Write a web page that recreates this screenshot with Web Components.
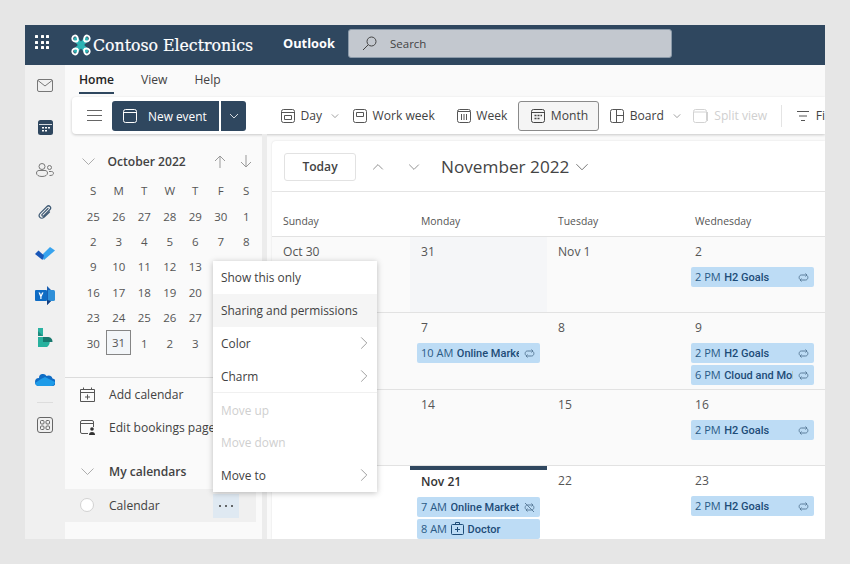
<!DOCTYPE html>
<html lang="en"><head><meta charset="utf-8"><title>Outlook Calendar</title>
<style>
html,body{margin:0;height:100%}
body{background:#e6e6e6;padding:25px;box-sizing:border-box;font-family:"Open Sans","Noto Sans",sans-serif;font-size:12.1px;color:#424242}
</style></head><body>
<x-app></x-app>
<script>
const chev=(d,s=8,c='#777')=>{const p={down:'M1 3l4 4 4-4',up:'M1 7l4-4 4 4',right:'M3 1l4 4-4 4'}[d];return `<svg width="${s}" height="${s}" viewBox="0 0 10 10" fill="none" stroke="${c}" stroke-width="${10/s*0.8}"><path d="${p}"/></svg>`};
const I={
cal:(c='#fff')=>`<svg width="14" height="14" viewBox="0 0 14 14" fill="none" stroke="${c}"><rect x=".5" y=".5" width="13" height="13" rx="2"/><path d="M1 3.5h12"/></svg>`,
day:`<svg width="14" height="14" viewBox="0 0 14 14" fill="none" stroke="#555"><rect x=".5" y=".5" width="13" height="13" rx="2"/><path d="M1 3.5h12M3.5 6.5h7v4h-7z"/></svg>`,
work:`<svg width="14" height="14" viewBox="0 0 14 14" fill="none" stroke="#555"><rect x=".5" y=".5" width="13" height="13" rx="2"/><path d="M3.5 3.5h7v4h-7z"/></svg>`,
week:`<svg width="14" height="14" viewBox="0 0 14 14" fill="none" stroke="#555"><rect x=".5" y=".5" width="13" height="13" rx="2"/><path d="M1 2.5h12M4.5 5v6M7 5v6M9.500 5v6"/></svg>`,
month:`<svg width="14" height="14" viewBox="0 0 14 14" fill="none" stroke="#444"><rect x=".5" y=".5" width="13" height="13" rx="2"/><path d="M1 3.5h12"/><path d="M3.5 6.500h2M6.500 6.500h2M9.500 6.500h1.500M3.500 9.500h2M6.500 9.500h2" stroke-width="1.4"/></svg>`,
board:`<svg width="14" height="14" viewBox="0 0 14 14" fill="none" stroke="#555"><rect x=".5" y=".5" width="13" height="13" rx="2"/><path d="M6.500 1v12M7 6.500h6"/></svg>`,
split:`<svg width="16" height="16" viewBox="0 0 16 16" fill="none" stroke="#d2d2d2"><rect x=".5" y="1.500" width="13" height="13" rx="2"/><path d="M1 4h12M14.500 4v9"/></svg>`,
filter:`<svg width="14" height="12" viewBox="0 0 14 12" fill="none" stroke="#555"><path d="M1 1.500h12M3 6h8M5 10.500h4"/></svg>`,
rep:`<svg width="11" height="11" viewBox="0 0 11 11" fill="none" stroke="#5d7f9c"><path d="M2 7.500C.6 6.500 .8 3 3.500 3H9M7.500 1.500L9 3 7.500 4.500M9 3.500c1.400 1 1.200 4.500-1.500 4.500H2M3.500 6.500L2 8l1.500 1.500"/></svg>`,
norep:`<svg width="11" height="11" viewBox="0 0 11 11" fill="none" stroke="#5d7f9c"><path d="M2 7.500C.6 6.500 .8 3 3.500 3H9M7.500 1.500L9 3 7.500 4.500M9 3.500c1.400 1 1.200 4.500-1.500 4.500H2M3.500 6.500L2 8l1.500 1.500M1 1l9 9"/></svg>`
};
function def(name,css,html){customElements.define(name,class extends HTMLElement{
  connectedCallback(){if(this.shadowRoot)return;this.attachShadow({mode:'open'}).innerHTML=`<style>${css}</style>`+(typeof html==='function'?html(this):html);}
});}

def('x-app',`:host{display:flex;flex-direction:column;width:800px;height:514px;overflow:hidden;position:relative;background:#fafafa}
.b{display:flex;flex:1;min-height:0}.m{flex:1;min-width:0;display:flex;flex-direction:column}
.c{flex:1;display:flex;min-height:0}`,
`<x-topbar></x-topbar><div class="b"><x-rail></x-rail><div class="m"><x-tabs></x-tabs><x-ribbon></x-ribbon><div class="c"><x-side></x-side><x-cal></x-cal></div></div></div><x-menu></x-menu>`);

def('x-topbar',`:host{display:flex;align-items:center;height:40px;background:#2f475f;color:#fff;flex:none}
.w{width:14px;height:14px;margin:0 0 6px 10px;display:grid;grid-template-columns:repeat(3,3px);gap:2.5px}.w i{background:#fff;border-radius:.5px}
svg.l{margin-left:22px;flex:none}
.n{font-family:"DejaVu Serif",serif;font-stretch:condensed;font-size:17.5px;margin-left:2px;width:160px;white-space:nowrap;-webkit-text-stroke:.2px #fff}
.o{font-weight:700;font-size:12.8px;margin:0 0 5px 30px;width:65px}
.s{width:324px;height:29px;background:#c3c8cf;border:1px solid #8b9aa9;border-radius:3px;display:flex;align-items:center;color:#444;font-size:11.5px;box-sizing:border-box;align-self:flex-start;margin-top:4px}
.s svg{margin:0 13px 0 13px}`,
`<div class="w">${'<i></i>'.repeat(9)}</div>
<svg class="l" width="20" height="22" viewBox="0 0 22 22" preserveAspectRatio="none"><path d="M3.500 3.500L7 3l4 4.500L15 3l3.500.5L19 7l-4.500 4 4.500 4-.5 3.500L15 19l-4-4.500L7 19l-3.500-.5L3 15l4.500-4L3 7z" fill="#2cb3b5"/><g fill="none" stroke="#fff" stroke-width="2"><path d="M7.500 7C3.500 8.500 1 6.500 1.500 4 2 1.500 5.500 .5 7 3c.5 1 .7 2.500.5 4M14.500 7c4 1.500 6.500-.5 6-3C20 1.500 16.500 .5 15 3c-.5 1-.7 2.500-.5 4M7.500 15c-4-1.500-6.500.5-6 3 .5 2.500 4 3.500 5.500 1 .5-1 .7-2.500.5-4M14.500 15c4-1.500 6.500.5 6 3-.5 2.500-4 3.500-5.500 1-.5-1-.7-2.500-.5-4"/></g></svg>
<div class="n">Contoso Electronics</div><div class="o">Outlook</div>
<div class="s"><svg width="15" height="15" viewBox="0 0 15 15" fill="none" stroke="#444"><circle cx="9.500" cy="5.500" r="4.500"/><path d="M6.200 8.800L1 14"/></svg>Search</div>`);

def('x-rail',`:host{display:flex;flex-direction:column;align-items:center;width:40px;flex:none;background:#f0f0f0;box-sizing:border-box}
div{height:41.9px;width:40px;display:flex;align-items:center;justify-content:center;flex:none}
div:first-child{margin-top:-1px}
.r{height:2px;display:block;width:16px;border-top:1px solid #ddd;margin:2px 0 0;box-sizing:border-box}.a{height:42px}`,
`<div><svg width="16" height="13" viewBox="0 0 16 13" fill="none" stroke="#777"><rect x=".5" y=".5" width="15" height="12" rx="1.500"/><path d="M1 1.500l7 5.500 7-5.500"/></svg></div>
<div><svg width="15" height="15" viewBox="0 0 15 15"><rect width="15" height="15" rx="2.500" fill="#2f475f"/><rect x="1" y="4" width="13" height=".8" fill="#fff"/><path d="M4 7h2v1.500H4zM7 7h2v1.500H7zM10 7h2v1.500h-2zM4 10h2v1.500H4zM7 10h2v1.500H7z" fill="#fff"/></svg></div>
<div><svg width="18" height="14" viewBox="0 0 18 14" fill="none" stroke="#777"><circle cx="6" cy="3.500" r="3"/><path d="M.5 10c0-1.500 1-2.500 2.500-2.500h6c1.500 0 2.500 1 2.500 2.500 0 2-2 3.500-5.500 3.500S.5 12 .5 10z"/><circle cx="13.500" cy="4.500" r="2"/><path d="M13 8.500h2.500c1.200 0 2 .7 2 1.800 0 1.500-1.700 2.400-4 2.200"/></svg></div>
<div><svg width="14" height="14" viewBox="0 0 14 14" fill="none" stroke="#3f5a74" stroke-width="1.2" stroke-linecap="round"><path d="M10 3.500L4.200 9.300c-1 1 .5 2.500 1.500 1.500l6.300-6.300c2-2-1-5-3-3L2.300 8.200c-3 3 .7 7 3.700 4L11.500 7"/></svg></div>
<div><svg width="20" height="15" viewBox="0 0 20 15"><path d="M6 10l9-9 5 3.500L9 14z" fill="#37a3ee"/><path d="M0 8l3.500-3.500L9 9.500 7.500 14z" fill="#1956b8"/></svg></div>
<div><svg width="20" height="19" viewBox="0 0 20 19"><path d="M12 0l5 5v9l-5 5z" fill="#1a5fb0"/><path d="M13 4h5.500a1.500 1.500 0 011.500 1.500v8a1.500 1.500 0 01-1.500 1.500H13z" fill="#2f8fd8"/><rect y="4" width="12" height="11" rx="1" fill="#0f6cc4"/><path d="M12 14l4 1-4 4z" fill="#123f82"/><path d="M3.500 6.500h1.500L6 9l1-2.500h1.500l-2 4.200V13H5.300v-2.300z" fill="#fff"/></svg></div>
<div><svg width="15" height="19" viewBox="0 0 15 19"><path d="M0 0h5v8H0z" fill="#1d8a7d"/><path d="M5 0v8L0 3V0z" fill="#2bb3a3"/><path d="M0 9h9a6 6 0 010 10H0z" fill="#27b19e"/><path d="M5 9v5h9.500a5 5 0 00-4-5z" fill="#18786e"/></svg></div>
<div><svg width="20" height="13" viewBox="0 0 20 13"><path d="M4 5a4 4 0 017.500-2 4 4 0 016 2.500A3.500 3.500 0 0116 13H4a4 4 0 010-8z" fill="#0f6cc4"/><path d="M0 10l6-4 4-2 10 5c-.3 2-1.600 4-4 4H4c-2 0-3.500-1.300-4-3z" fill="#1e9be8"/></svg></div>
<div class="r"></div>
<div class="a"><svg width="16" height="16" viewBox="0 0 16 16" fill="none" stroke="#666"><rect x=".5" y=".5" width="15" height="15" rx="2.500"/><rect x="3.500" y="3.500" width="3.500" height="3.500" rx="1"/><rect x="9" y="3.500" width="3.500" height="3.500" rx="1"/><rect x="3.500" y="9" width="3.500" height="3.500" rx="1"/><rect x="9" y="9" width="3.500" height="3.500" rx="1"/></svg></div>`);

def('x-tabs',`:host{display:flex;height:32px;padding-left:14px;gap:27px;flex:none;box-sizing:border-box}
span{display:flex;align-items:center;height:25px;margin-top:2px;border-bottom:2px solid transparent;box-sizing:content-box}
.a{border-bottom-color:#2f475f;color:#222;font-weight:600}`,
`<span class="a">Home</span><span>View</span><span>Help</span>`);

def('x-rbtn',`:host{display:flex;align-items:center;height:30px;box-sizing:border-box;color:#424242;white-space:nowrap;flex:none}
:host([active]){border:1px solid #8a8a8a;border-radius:3px;background:#f5f5f5;padding:0 10px 0 12px}
:host([dis]){color:#d0d0d0}
span.t{margin-left:5.5px}span.c{margin-left:9px;display:flex}`,
el=>`${I[el.getAttribute('i')]}<span class="t"><slot></slot></span>${el.hasAttribute('drop')?`<span class="c">${chev('down',8,'#888')}</span>`:''}`);

def('x-ribbon',`:host{display:flex;align-items:center;height:37px;margin-left:7px;background:#fff;border-radius:4px 0 0 4px;box-shadow:0 1px 3px rgba(0,0,0,.2);flex:none;overflow:hidden;padding-left:15px;box-sizing:border-box}
.h{width:15px;height:9px;border:solid #666;border-width:1px 0;margin-right:10px;flex:none}.h:after{content:"";display:block;height:1px;background:#666;margin-top:4px}
.n{display:flex;height:30px;gap:2px;color:#fff;margin-right:35px;flex:none}
.n div{background:#2f475f;display:flex;align-items:center;border-radius:3px 0 0 3px}
.n .p{width:107px;padding-left:11px;box-sizing:border-box;font-weight:500;font-size:11.9px}.p svg{margin-right:11px}
.n .d{width:25px;border-radius:0 3px 3px 0;justify-content:center}
.r{width:1px;height:22px;background:#e4e4e4;margin:0 14px;flex:none}`,
`<div class="h"></div><div class="n"><div class="p">${I.cal()}New event</div><div class="d">${chev('down',10,'#fff')}</div></div>
<x-rbtn i="day" drop style="margin-right:14px">Day</x-rbtn><x-rbtn i="work" style="margin-right:22px">Work week</x-rbtn><x-rbtn i="week" style="margin-right:11px">Week</x-rbtn><x-rbtn i="month" active style="margin-right:11px">Month</x-rbtn><x-rbtn i="board" drop style="margin-right:12px">Board</x-rbtn><x-rbtn i="split" dis>Split view</x-rbtn><div class="r"></div><x-rbtn i="filter">Filter</x-rbtn>`);

def('x-minical',`:host{display:block;padding:0 0 0 15.5px;color:#424242}
.h{display:flex;align-items:center;height:26px}
.h .t{font-weight:600;margin-left:12px;width:106px;white-space:nowrap}
.h svg{flex:none}
.g{display:grid;grid-template-columns:repeat(7,25.5px);grid-auto-rows:25.4px;margin-top:4px;font-size:11.5px;text-align:center;color:#555}
.g span{display:flex;align-items:center;justify-content:center}
.s{border:1px solid #858585;background:#f3f6f9;box-sizing:border-box;width:25px;height:25px}`,
()=>{const w='SMTWTFS'.split('').map(x=>`<span>${x}</span>`).join('');
const d=[25,26,27,28,29,30,1,2,3,4,5,6,7,8,9,10,11,12,13,14,15,16,17,18,19,20,21,22,23,24,25,26,27,28,29,30,31,1,2,3,4,5].map((n,i)=>`<span class="${i==36?'s':''}">${n}</span>`).join('');
return `<div class="h">${chev('down',15,'#999')}<span class="t">October 2022</span><svg width="12" height="13" viewBox="0 0 12 13" fill="none" stroke="#999"><path d="M6 13V1M1 6l5-5 5 5"/></svg><svg width="12" height="13" viewBox="0 0 12 13" fill="none" stroke="#999" style="margin-left:14px"><path d="M6 0v12M1 7l5 5 5-5"/></svg></div><div class="g">${w}${d}</div>`});

def('x-side',`:host{display:block;width:197px;flex:none;margin-right:5px;border-right:5px solid #ececec;box-sizing:content-box;padding-top:14px}
.l{border-top:1px solid #dcdcdc;margin-top:21px}
.i{display:flex;align-items:center;height:33px;padding-left:15px;white-space:nowrap;overflow:hidden}
.i svg{flex:none;margin-right:14px}
.my{height:33px;margin-top:11px;margin-bottom:1px;font-weight:600}
.cal{background:#f0f0f0;width:191px;position:relative;box-sizing:border-box}
.o{width:14px;height:14px;border-radius:50%;background:#fff;border:1px solid #d2d2d2;margin:0 15px 0 0;flex:none;box-sizing:border-box}
.m{position:absolute;left:148px;top:5px;width:26px;height:24px;background:#dfe9f2;display:flex;gap:4px;align-items:center;justify-content:center}
.m i{width:2px;height:2px;background:#3a3a3a;border-radius:50%}`,
`<x-minical></x-minical><div class="l"></div>
<div class="i"><svg width="15" height="15" viewBox="0 0 15 15" fill="none" stroke="#555"><path d="M.5 2.500h14v12H.5zM1 5.500h13M3.500 .5v2M11.500 .5v2M7.500 7.500v5M5 10h5"/></svg>Add calendar</div>
<div class="i"><svg width="15" height="15" viewBox="0 0 15 15"><path d="M8 13.500H2a1.500 1.500 0 01-1.500-1.500V2A1.500 1.500 0 012 .5h10A1.500 1.500 0 0113.500 2v5M1 3.500h12" fill="none" stroke="#555"/><circle cx="12" cy="9" r="1.800" fill="#333"/><path d="M9 15c0-2 1-3 3-3s3 1 3 3z" fill="#333"/></svg>Edit bookings page</div>
<div class="i my">${chev('down',15,'#999').replace('<svg','<svg style="margin-right:14px"')}My calendars</div>
<div class="i cal"><span class="o"></span>Calendar<span class="m"><i></i><i></i><i></i></span></div>`);

def('x-ev',`:host{display:flex;align-items:baseline;height:20px;line-height:20px;margin:0 7px 2px;padding:0 5px 0 4px;background:#bddcf5;border-radius:2px;color:#1d4c78;font-size:11px;white-space:nowrap;overflow:hidden}
.t{margin-right:3.5px;flex:none;color:#2a5a85}.n{font-family:Roboto,sans-serif;font-weight:500;font-size:11px;flex:1;overflow:hidden}
.n svg{vertical-align:-2px}.r{margin-left:5px;align-self:center;display:flex}`,
el=>`<span class="t">${el.getAttribute('t')}</span><span class="n">${el.hasAttribute('doc')?`<svg style="margin-right:4px" width="13" height="13" viewBox="0 0 13 13" fill="none" stroke="#1d4c78"><rect x=".5" y="2.500" width="12" height="10" rx="1"/><path d="M4.500 2.500v-2h4v2M6.500 5v5M4 7.500h5"/></svg>`:''}<slot></slot></span>${el.getAttribute('r')?`<span class="r">${I[el.getAttribute('r')]}</span>`:''}`);

def('x-cell',`:host{display:block;box-sizing:border-box;border-top:1px solid #e2e2e2;background:#fafafa;min-width:0;overflow:hidden;position:relative}
:host([w]){background:#fff}:host([sel]){background:#f5f6f8}
.d{display:flex;align-items:center;height:28px;padding:0 0 1px 11px;margin-bottom:1px;color:#555;font-size:12.1px}
:host([today]) .d{font-weight:600;color:#333;height:30px;padding-bottom:0}
:host([today]):before{content:"";position:absolute;left:0;right:0;top:0;height:4px;background:#2f475f}`,
el=>`<div class="d">${el.getAttribute('d')||''}</div><slot></slot>`);

def('x-cal',`:host{display:flex;flex-direction:column;flex:1;min-width:0;background:#fff;border-radius:4px 0 0 0;margin-top:7px;box-shadow:0 0 2px rgba(0,0,0,.12);overflow:hidden}
.h{display:flex;align-items:center;height:51px;flex:none;padding:1px 0 0 12px;border-bottom:1px solid #e4e4e4;box-sizing:border-box}
.td{width:72px;height:28px;border:1px solid #e2e2e2;border-radius:3px;display:flex;align-items:center;justify-content:center;font-weight:600;box-sizing:border-box;margin-right:16px}
.h .u{display:flex;width:36px}.h .v{display:flex;width:33px}
.ti{font-size:17.2px;color:#444;white-space:nowrap;margin-right:6px}
.wd,.gr{display:grid;grid-template-columns:138px 137px 137px 137px 137px}
.wd{height:44px;flex:none;background:#fff;font-size:10.4px;color:#555}
.wd span{display:flex;align-items:center;padding:13px 0 0 11px}
.gr{grid-template-rows:76px 77px 76px 76px;flex:1;min-height:0}`,
`<div class="h"><div class="td">Today</div><span class="u">${chev('up',12,'#777')}</span><span class="v">${chev('down',12,'#777')}</span><span class="ti">November 2022</span>${chev('down',14,'#555')}</div>
<div class="wd"><span>Sunday</span><span>Monday</span><span>Tuesday</span><span>Wednesday</span><span>Thursday</span></div>
<div class="gr">
<x-cell d="Oct 30"></x-cell><x-cell d="31" sel></x-cell><x-cell d="Nov 1"></x-cell><x-cell d="2"><x-ev t="2 PM" r="rep">H2 Goals</x-ev></x-cell><x-cell d="3"></x-cell>
<x-cell d="6"></x-cell><x-cell d="7"><x-ev t="10 AM" r="rep">Online Marketing</x-ev></x-cell><x-cell d="8"></x-cell><x-cell d="9"><x-ev t="2 PM" r="rep">H2 Goals</x-ev><x-ev t="6 PM" r="rep">Cloud and Mobile</x-ev></x-cell><x-cell d="10"></x-cell>
<x-cell d="13"></x-cell><x-cell d="14"></x-cell><x-cell d="15"></x-cell><x-cell d="16"><x-ev t="2 PM" r="rep">H2 Goals</x-ev></x-cell><x-cell d="17"></x-cell>
<x-cell d="20" w></x-cell><x-cell d="Nov 21" today w><x-ev t="7 AM" r="norep">Online Marketing</x-ev><x-ev t="8 AM" doc>Doctor</x-ev></x-cell><x-cell d="22" w></x-cell><x-cell d="23" w><x-ev t="2 PM" r="rep">H2 Goals</x-ev></x-cell><x-cell d="24" w></x-cell>
</div>`);

def('x-mi',`:host{display:flex;align-items:center;height:32.8px;padding:0 6px 0 8px;justify-content:space-between;color:#424242;white-space:nowrap;font-size:11.9px}
:host([hl]){background:#f5f5f5}:host([dis]){color:#cfcfcf}`,
el=>`<span><slot></slot></span>${el.hasAttribute('sub')?chev('right',14,'#888'):''}`);

def('x-menu',`:host{position:absolute;left:188px;top:236px;width:164px;background:#fff;box-shadow:0 1px 6px rgba(0,0,0,.25);display:block}
hr{border:0;border-top:1px solid #f0f0f0;margin:0}`,
`<x-mi>Show this only</x-mi><x-mi hl>Sharing and permissions</x-mi><x-mi sub>Color</x-mi><x-mi sub>Charm</x-mi><hr><x-mi dis>Move up</x-mi><x-mi dis>Move down</x-mi><x-mi sub>Move to</x-mi>`);
</script>
</body></html>
